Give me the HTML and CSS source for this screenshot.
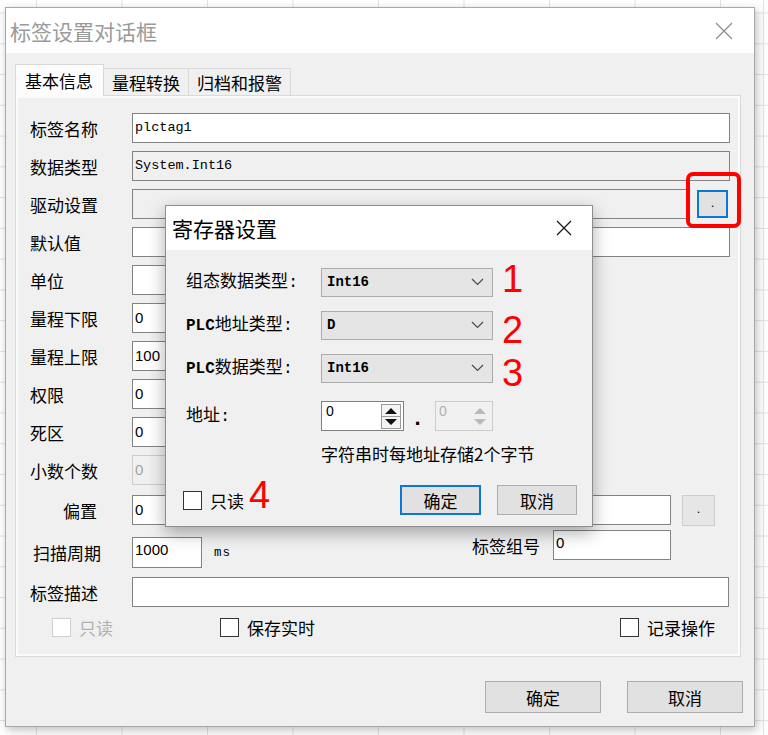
FILE: index.html
```html
<!DOCTYPE html>
<html lang="zh-CN">

<head>
    <meta charset="UTF-8">
    <meta name="viewport" content="width=device-width, initial-scale=1.0">
    <title>标签设置对话框</title>
    <link rel="stylesheet" href="styles.css">
</head>

<body>
    <div class="window">
        <div class="titlebar">
            <span class="title">标签设置对话框</span>
            <svg class="close" width="18" height="18" viewBox="0 0 18 18">
                <path d="M1 1L17 17M17 1L1 17" stroke="#8c8c8c" stroke-width="1.2" fill="none" />
            </svg>
        </div>

        <div class="content">
            <div class="tabs">
                <div class="tab on">基本信息</div>
                <div class="tab">量程转换</div>
                <div class="tab">归档和报警</div>
            </div>

            <div class="panel">
                <div class="row"><span class="lbl">标签名称</span><div class="box mono w-full">plctag1</div></div>
                <div class="row"><span class="lbl">数据类型</span><div class="box mono ro w-full">System.Int16</div></div>
                <div class="row"><span class="lbl">驱动设置</span><div class="box ro w-drv"></div><button class="dot focus">.</button></div>
                <div class="row"><span class="lbl">默认值</span><div class="box w-full"></div></div>
                <div class="row"><span class="lbl">单位</span><div class="box w-short"></div></div>
                <div class="row"><span class="lbl">量程下限</span><div class="box num w-short">0</div></div>
                <div class="row"><span class="lbl">量程上限</span><div class="box num w-short">100</div></div>
                <div class="row"><span class="lbl">权限</span><div class="box num w-short">0</div></div>
                <div class="row"><span class="lbl">死区</span><div class="box num w-short">0</div></div>
                <div class="row"><span class="lbl">小数个数</span><div class="box num off w-short">0</div></div>
                <div class="row r-offset"><span class="lbl indent">偏置</span><div class="box num w-offset">0</div><button class="dot plain">.</button></div>
                <div class="row r-scan">
                    <div class="scan">
                        <span class="lbl pad3">扫描周期</span>
                        <div class="box num top w-scan">1000</div>
                        <span class="unit">ms</span>
                    </div>
                    <div class="group">
                        <span class="lbl2">标签组号</span>
                        <div class="box num top w-group">0</div>
                    </div>
                </div>
                <div class="row r-desc"><span class="lbl">标签描述</span><div class="box w-desc"></div></div>
                <div class="row r-checks">
                    <div class="chk off c1"><span class="sq"></span>只读</div>
                    <div class="chk c2"><span class="sq"></span>保存实时</div>
                    <div class="chk"><span class="sq"></span>记录操作</div>
                </div>
            </div>

            <div class="actions">
                <button class="btn">确定</button>
                <button class="btn">取消</button>
            </div>
        </div>

        <!-- 寄存器设置弹窗 -->
        <div class="popup">
            <div class="ptitle">
                <span>寄存器设置</span>
                <svg width="16" height="16" viewBox="0 0 16 16">
                    <path d="M1 1L15 15M15 1L1 15" stroke="#1a1a1a" stroke-width="1.3" fill="none" />
                </svg>
            </div>
            <div class="pbody">
                <div class="prow">
                    <span class="plbl">组态数据类型:</span>
                    <div class="select">Int16<svg width="13" height="8" viewBox="0 0 13 8"><path d="M1 1l5.5 5.5L12 1" fill="none" stroke="#4a4a4a" stroke-width="1.2" /></svg></div>
                    <span class="mark-num n1">1</span>
                </div>
                <div class="prow r2">
                    <span class="plbl"><b>PLC</b>地址类型:</span>
                    <div class="select">D<svg width="13" height="8" viewBox="0 0 13 8"><path d="M1 1l5.5 5.5L12 1" fill="none" stroke="#4a4a4a" stroke-width="1.2" /></svg></div>
                    <span class="mark-num n2">2</span>
                </div>
                <div class="prow r3">
                    <span class="plbl"><b>PLC</b>数据类型:</span>
                    <div class="select">Int16<svg width="13" height="8" viewBox="0 0 13 8"><path d="M1 1l5.5 5.5L12 1" fill="none" stroke="#4a4a4a" stroke-width="1.2" /></svg></div>
                    <span class="mark-num n3">3</span>
                </div>
                <div class="prow r4">
                    <span class="plbl">地址:</span>
                    <div class="spin">
                        <span>0</span>
                        <svg width="20" height="25" viewBox="0 0 20 25">
                            <rect x="0.5" y="0.5" width="19" height="24" fill="#f4f4f4" stroke="#9a9a9a" />
                            <line x1="1" y1="12.5" x2="19" y2="12.5" stroke="#9a9a9a" />
                            <path d="M4 10L10 4L16 10Z M4 15L10 21L16 15Z" fill="#111" />
                        </svg>
                    </div>
                    <span class="sep">.</span>
                    <div class="spin off">
                        <span>0</span>
                        <svg width="20" height="25" viewBox="0 0 20 25">
                            <path d="M4 10L10 4L16 10Z M4 15L10 21L16 15Z" fill="#b9b9b9" />
                        </svg>
                    </div>
                </div>
                <div class="hint">字符串时每地址存储2个字节</div>
                <div class="pfoot">
                    <div class="chk"><span class="sq"></span>只读</div>
                    <span class="mark-num n4">4</span>
                    <button class="pbtn focus">确定</button>
                    <button class="pbtn">取消</button>
                </div>
            </div>
        </div>

        <div class="mark-box"></div>
    </div>
</body>

</html>
```

FILE: styles.css
```css
* {
    box-sizing: border-box;
}

body {
    margin: 0;
    width: 768px;
    height: 735px;
    overflow: hidden;
    font-family: "Noto Sans CJK SC", "Noto Sans", sans-serif;
    font-size: 17px;
    color: #000;
    background-color: #fff;
    background-image:
        linear-gradient(90deg, #e2e2e2 1px, transparent 1px),
        linear-gradient(90deg, #e2e2e2 1px, transparent 1px),
        linear-gradient(180deg, #e2e2e2 1px, transparent 1px);
    background-size: 1px 100%, 85.5px 100%, 100% 30.77px;
    background-position: 763px 0, 121.5px 0, 0 12.5px;
    background-repeat: no-repeat, repeat-x, repeat-y;
}

button {
    font-family: inherit;
    font-size: inherit;
    color: #000;
    padding: 0;
    margin: 0;
}

/* 主窗口 */
.window {
    position: relative;
    width: 750px;
    height: 720px;
    margin: 7px 0 0 5px;
    border: 1px solid #a8a8a8;
    background: #f0f0f0;
    box-shadow: 2px 3px 9px rgba(0, 0, 0, 0.25);
    display: flex;
    flex-direction: column;
}

.titlebar {
    height: 45px;
    background: #fff;
    display: flex;
    align-items: center;
    justify-content: space-between;
    padding: 0 21px 0 4px;
}

.title {
    font-size: 21px;
    color: #9a9a9a;
}

.close {
    display: block;
}

.content {
    padding: 11px 0 0 9px;
}

.tabs {
    display: flex;
    align-items: flex-end;
    height: 31px;
}

.tab {
    height: 27px;
    padding: 0 8px;
    border: 1px solid #d9d9d9;
    border-bottom: none;
    border-left: none;
    background: #f0f0f0;
    display: flex;
    align-items: center;
    line-height: 1;
}

.tab.on {
    height: 32px;
    margin-bottom: -1px;
    padding: 0 10px 0 9px;
    border-left: 1px solid #d9d9d9;
    background: #fcfcfc;
    position: relative;
    z-index: 1;
}

.panel {
    width: 726px;
    border: 1px solid #d9d9d9;
    background: #f0f0f0;
    box-shadow: inset 0 0 0 2px #fbfbfb;
    padding: 17px 0 19px 14px;
}

.row {
    display: flex;
    align-items: center;
    height: 30px;
    margin-top: 8px;
}

.row:first-child {
    margin-top: 0;
}

.lbl {
    width: 102px;
    flex-shrink: 0;
    line-height: 1;
}

.lbl.indent {
    padding-left: 33px;
}

.lbl.pad3 {
    padding-left: 3px;
}

.box {
    height: 30px;
    border: 1px solid #838383;
    background: #fff;
    padding: 0 0 2px 2px;
    display: flex;
    align-items: center;
    flex-shrink: 0;
}

.box.top {
    align-items: flex-start;
    padding-top: 3px;
}

.box.ro {
    background: #f0f0f0;
}

.box.off {
    background: #f0f0f0;
    border-color: #cccccc;
    color: #a3a3a3;
}

.mono {
    font-family: "Liberation Mono", monospace;
    font-size: 13.5px;
}

.num {
    font-family: "Liberation Sans", sans-serif;
    font-size: 15px;
}

.w-full { width: 598px; }
.w-drv { width: 556px; }
.w-short { width: 260px; }
.w-offset { width: 539px; }
.w-scan { width: 70px; height: 31px; }
.w-group { width: 118px; }
.w-desc { width: 597px; }

.dot {
    width: 31px;
    height: 28px;
    margin-left: 9px;
    background: #e1e1e1;
    border: 2px solid #0a78d6;
    font-family: "Liberation Sans", sans-serif;
    font-size: 13px;
    line-height: 1;
    padding-bottom: 4px;
}

.dot.plain {
    width: 33px;
    height: 31px;
    margin-left: 11px;
    border: 1px solid #cdcdcd;
    background: #e6e6e6;
}

.r-offset {
    margin-top: 10px;
}

.r-scan {
    margin-top: 5px;
    height: 38px;
    align-items: flex-start;
}

.scan {
    display: flex;
    align-items: center;
    margin-top: 7px;
    width: 340px;
}

.unit {
    margin-left: 12px;
    font-family: "Liberation Mono", monospace;
    font-size: 12.5px;
    letter-spacing: 1px;
}

.group {
    display: flex;
    align-items: center;
    margin-left: 102px;
}

.lbl2 {
    width: 81px;
    line-height: 1;
}

.r-desc {
    margin-top: 9px;
}

.r-checks {
    margin-top: 11px;
    height: 19px;
}

.chk {
    display: flex;
    align-items: center;
    gap: 8px;
    line-height: 1;
}

.sq {
    width: 19px;
    height: 19px;
    border: 1px solid #333;
    background: #fff;
}

.chk.off {
    color: #b0b0b0;
}

.chk.off .sq {
    border-color: #cfcfcf;
}

.c1 {
    width: 168px;
    margin-left: 22px;
}

.c2 {
    width: 400px;
}

.actions {
    display: flex;
    gap: 26px;
    padding: 24px 0 0 470px;
}

.btn {
    width: 116px;
    height: 32px;
    background: #e1e1e1;
    border: 1px solid #adadad;
}

/* 寄存器设置 */
.popup {
    position: absolute;
    left: 159px;
    top: 197px;
    width: 428px;
    height: 322px;
    border: 1px solid #8e8e8e;
    background: #f0f0f0;
    box-shadow: 0 6px 16px rgba(0, 0, 0, 0.32);
    z-index: 2;
}

.ptitle {
    height: 44px;
    background: #fff;
    display: flex;
    align-items: center;
    justify-content: space-between;
    padding: 0 20px 0 6px;
    font-size: 21px;
}

.ptitle svg {
    display: block;
}

.pbody {
    padding: 18px 15px 0 20px;
}

.prow {
    display: flex;
    align-items: center;
    height: 29px;
}

.prow.r2,
.prow.r3 {
    margin-top: 14px;
}

.prow.r4 {
    margin-top: 18px;
    height: 30px;
}

.plbl {
    width: 135px;
    flex-shrink: 0;
    font-family: "Liberation Mono", "Noto Sans CJK SC", monospace;
    font-size: 17px;
    line-height: 1;
}

.plbl b {
    font-size: 16px;
}

.select {
    width: 172px;
    height: 29px;
    border: 1px solid #acacac;
    background: #e5e5e5;
    display: flex;
    align-items: center;
    justify-content: space-between;
    padding: 0 8px 1px 5px;
    font-family: "Liberation Mono", monospace;
    font-weight: bold;
    font-size: 14px;
}

.select svg {
    display: block;
}

.mark-num {
    font-family: "Liberation Sans", sans-serif;
    font-size: 38px;
    line-height: 29px;
    color: #ff0000;
    margin-left: 9px;
}

.n1 { margin-top: -6px; }
.n2, .n3 { margin-top: 10px; }
.n4 { margin-left: 5px; margin-top: -10px; }

.spin {
    width: 83px;
    height: 30px;
    border: 1px solid #7f7f7f;
    background: #fff;
    display: flex;
    justify-content: space-between;
    padding: 1px 2px 0 4px;
    font-family: "Liberation Sans", sans-serif;
    font-size: 14px;
    line-height: 16px;
}

.spin svg {
    display: block;
    margin-top: 1px;
}

.spin.off {
    width: 58px;
    border-color: #cccccc;
    background: #f0f0f0;
    color: #b0b0b0;
    padding-left: 3px;
}

.sep {
    width: 31px;
    align-self: flex-end;
    text-align: center;
    font-family: "Liberation Sans", sans-serif;
    font-weight: bold;
    font-size: 22px;
    line-height: 1;
    padding-bottom: 2px;
    padding-right: 4px;
}

.hint {
    margin-top: 11px;
    padding-left: 135px;
    line-height: 24px;
}

.pfoot {
    display: flex;
    align-items: center;
    margin-top: 19px;
    margin-left: -3px;
    height: 30px;
}

.pbtn {
    width: 80px;
    height: 30px;
    background: #e1e1e1;
    border: 1px solid #adadad;
    margin-left: 16px;
}

.pbtn.focus {
    width: 81px;
    margin-left: auto;
    border: 2px solid #0a78d6;
}

/* 红色标注框 */
.mark-box {
    position: absolute;
    left: 680px;
    top: 164px;
    width: 55px;
    height: 56px;
    border: 4px solid #ff0000;
    border-radius: 7px;
    z-index: 3;
}
```
